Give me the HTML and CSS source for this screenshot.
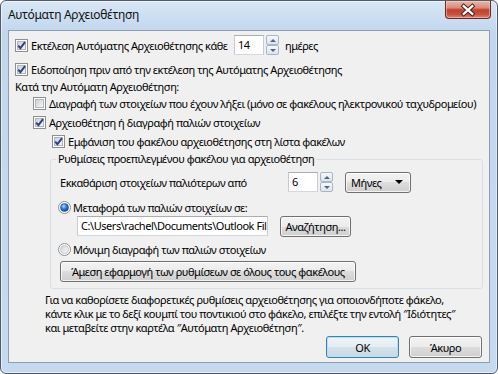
FILE: index.html
```html
<!DOCTYPE html>
<html lang="el">
<head>
    <meta charset="UTF-8">
    <title>Αυτόματη Αρχειοθέτηση</title>
    <link rel="stylesheet" href="styles.css">
</head>
<body>
    <!-- shared glyphs for checkboxes and radio buttons -->
    <svg class="defs" width="0" height="0">
        <defs>
            <linearGradient id="boxfill" x1="0" y1="0" x2="1" y2="1">
                <stop offset="0" stop-color="#cbcfd5"/>
                <stop offset="1" stop-color="#f7f7f7"/>
            </linearGradient>
            <linearGradient id="radiofill" x1="0" y1="0" x2="1" y2="1">
                <stop offset="0" stop-color="#d0d3d8"/>
                <stop offset="1" stop-color="#fafafa"/>
            </linearGradient>
            <radialGradient id="dotfill" cx="0.4" cy="0.35" r="0.7">
                <stop offset="0" stop-color="#b6e0fb"/>
                <stop offset="0.45" stop-color="#2f82de"/>
                <stop offset="1" stop-color="#103f94"/>
            </radialGradient>
            <symbol id="cb-off" viewBox="0 0 13 13">
                <rect x="0.5" y="0.5" width="12" height="12" fill="#fff" stroke="#8e8f8f"/>
                <rect x="2.5" y="2.5" width="8" height="8" fill="url(#boxfill)" stroke="#b3b7bd"/>
            </symbol>
            <symbol id="cb-on" viewBox="0 0 13 13">
                <rect x="0.5" y="0.5" width="12" height="12" fill="#fff" stroke="#8e8f8f"/>
                <rect x="2.5" y="2.5" width="8" height="8" fill="url(#boxfill)" stroke="#b3b7bd"/>
                <path d="M3.2 6.6 L5.4 9.2 L10 3.2" fill="none" stroke="#2a3f8e" stroke-width="1.9"/>
            </symbol>
            <symbol id="rb-off" viewBox="0 0 13 13">
                <circle cx="6.5" cy="6.5" r="6" fill="#fff" stroke="#8e8f8f"/>
                <circle cx="6.5" cy="6.5" r="4" fill="url(#radiofill)" stroke="#b8bcc2" stroke-width="0.8"/>
            </symbol>
            <symbol id="rb-on" viewBox="0 0 13 13">
                <circle cx="6.5" cy="6.5" r="6" fill="#fff" stroke="#8e8f8f"/>
                <circle cx="6.5" cy="6.5" r="4" fill="url(#dotfill)" stroke="#1d4f9c" stroke-width="0.6"/>
            </symbol>
        </defs>
    </svg>

    <div class="window">
        <div class="titlebar">
            <span class="title">Αυτόματη Αρχειοθέτηση</span>
            <div class="close">
                <svg width="46" height="18" viewBox="0 0 46 18">
                    <path d="M18.5 5 L27.5 13 M27.5 5 L18.5 13" stroke="#4a1a14" stroke-width="4.4" stroke-linecap="square"/>
                    <path d="M18.5 5 L27.5 13 M27.5 5 L18.5 13" stroke="#fff" stroke-width="2.4" stroke-linecap="square"/>
                </svg>
            </div>
        </div>

        <div class="client">
            <div class="row r1 lvl0">
                <svg class="box"><use href="#cb-on"/></svg>
                <span class="label run-label">Εκτέλεση Αυτόματης Αρχειοθέτησης κάθε</span>
                <div class="edit num">14</div>
                <div class="updown"><span class="ud up"></span><span class="ud down"></span></div>
                <span class="unit">ημέρες</span>
            </div>
            <div class="row r2 lvl0">
                <svg class="box"><use href="#cb-on"/></svg>
                <span class="label">Ειδοποίηση πριν από την εκτέλεση της Αυτόματης Αρχειοθέτησης</span>
            </div>
            <div class="row r3 lvl0">
                <span>Κατά την Αυτόματη Αρχειοθέτηση:</span>
            </div>
            <div class="row r4 lvl1">
                <svg class="box"><use href="#cb-off"/></svg>
                <span class="label">Διαγραφή των στοιχείων που έχουν λήξει (μόνο σε φακέλους ηλεκτρονικού ταχυδρομείου)</span>
            </div>
            <div class="row r5 lvl1">
                <svg class="box"><use href="#cb-on"/></svg>
                <span class="label">Αρχειοθέτηση ή διαγραφή παλιών στοιχείων</span>
            </div>
            <div class="row r6 lvl2">
                <svg class="box"><use href="#cb-on"/></svg>
                <span class="label">Εμφάνιση του φακέλου αρχειοθέτησης στη λίστα φακέλων</span>
            </div>

            <fieldset class="group">
                <legend>Ρυθμίσεις προεπιλεγμένου φακέλου για αρχειοθέτηση</legend>
                <div class="row r7">
                    <span class="clean-label">Εκκαθάριση στοιχείων παλιότερων από</span>
                    <div class="edit num">6</div>
                    <div class="updown"><span class="ud up"></span><span class="ud down"></span></div>
                    <div class="btn combo"><span>Μήνες</span><span class="arrow"></span></div>
                </div>
                <div class="row r8">
                    <svg class="box radio"><use href="#rb-on"/></svg>
                    <span class="label">Μεταφορά των παλιών στοιχείων σε:</span>
                </div>
                <div class="row r-path">
                    <div class="edit path">C:\Users\rachel\Documents\Outlook Fil</div>
                    <div class="btn browse">Αναζήτηση...</div>
                </div>
                <div class="row r9">
                    <svg class="box radio"><use href="#rb-off"/></svg>
                    <span class="label">Μόνιμη διαγραφή των παλιών στοιχείων</span>
                </div>
                <div class="row r-apply">
                    <div class="btn apply">Άμεση εφαρμογή των ρυθμίσεων σε όλους τους φακέλους</div>
                </div>
            </fieldset>

            <p class="note">Για να καθορίσετε διαφορετικές ρυθμίσεις αρχειοθέτησης για οποιονδήποτε φάκελο,<br>κάντε κλικ με το δεξί κουμπί του ποντικιού στο φάκελο, επιλέξτε την εντολή ″Ιδιότητες″<br>και μεταβείτε στην καρτέλα ″Αυτόματη Αρχειοθέτηση″.</p>

            <div class="actions">
                <div class="btn ok">OK</div>
                <div class="btn">Άκυρο</div>
            </div>
        </div>
    </div>
</body>
</html>
```

FILE: styles.css
```css
body {
    margin: 0;
    font-family: "Noto Sans", "Open Sans", sans-serif;
    font-size: 11px;
    letter-spacing: -0.45px;
    color: #000;
    background-color: #fff;
}

.defs {
    position: absolute;
    width: 0;
    height: 0;
}

.window {
    width: 498px;
    height: 374px;
    box-sizing: border-box;
    border: 1px solid #525b67;
    border-radius: 6px;
    background: linear-gradient(#d8e7f6, #c2d7ee 30px, #c6daef);
    box-shadow: inset 0 0 0 1px rgba(255, 255, 255, 0.55);
    display: flex;
    flex-direction: column;
    overflow: hidden;
}

.titlebar {
    height: 29px;
    display: flex;
    justify-content: space-between;
    align-items: flex-start;
    padding-left: 7px;
}

.title {
    line-height: 28px;
    font-size: 12px;
    letter-spacing: -0.3px;
    color: #111;
}

.close {
    width: 46px;
    height: 18px;
    margin-right: 6px;
    box-sizing: border-box;
    border: 1px solid #6a2a22;
    border-top: none;
    border-radius: 0 0 4px 4px;
    background: linear-gradient(#e9b7aa, #d98b7b 40%, #c2412f 52%, #c8513d 78%, #de8670);
    box-shadow: inset 0 0 0 1px rgba(255, 220, 210, 0.45);
    display: flex;
}

.client {
    margin: 0 7px;
    height: 333px;
    box-sizing: border-box;
    border: 1px solid #8d9db2;
    background-color: #f0f0f0;
    padding-top: 3px;
}

.row {
    display: flex;
    align-items: center;
    white-space: nowrap;
}

.lvl0 { padding-left: 6px; }
.lvl1 { padding-left: 24px; }
.lvl2 { padding-left: 43px; }

.r1 { height: 22px; }
.r2 { height: 18px; margin-top: 4px; }
.r3 { height: 16px; }
.r4 { height: 16px; margin-top: 1px; }
.r5 { height: 18px; margin-top: 2px; }
.r6 { height: 18px; margin-top: 1px; }

.box {
    width: 13px;
    height: 13px;
    flex: none;
    margin-right: 3px;
}

.radio {
    margin-left: -2px;
    margin-right: 2px;
}

.run-label {
    width: 203px;
}

.edit {
    box-sizing: border-box;
    height: 20px;
    background-color: #fff;
    border: 1px solid #abadb3;
    border-bottom-color: #d5d8de;
    border-left-color: #c9ccd3;
    border-right-color: #c9ccd3;
    line-height: 18px;
    padding-left: 3px;
}

.num {
    width: 30px;
}

.updown {
    display: flex;
    flex-direction: column;
    width: 13px;
    height: 20px;
    margin-left: 2px;
}

.ud {
    flex: 1;
    box-sizing: border-box;
    border: 1px solid #a8b6c8;
    border-radius: 2px;
    background: linear-gradient(#f7f9fc, #dde4ed);
    display: flex;
    align-items: center;
    justify-content: center;
}

.ud::after {
    content: "";
    border-left: 3px solid transparent;
    border-right: 3px solid transparent;
}

.up::after {
    border-bottom: 3px solid #4f6686;
}

.down::after {
    border-top: 3px solid #4f6686;
}

.unit {
    margin-left: 6px;
}

.group {
    margin: 1px 6px 0 41px;
    padding: 4px 6px 6px 9px;
    border: 1px solid #d5dfe5;
    border-radius: 3px;
    min-width: 0;
}

.group legend {
    padding: 0 2px;
    margin-left: -4px;
    line-height: 16px;
}

.r7 { height: 22px; }
.r8 { height: 16px; margin-top: 6px; }
.r-path { height: 22px; }
.r9 { height: 18px; margin-top: 3px; }
.r-apply { height: 21px; margin-top: 3px; }

.clean-label {
    width: 228px;
}

.btn {
    box-sizing: border-box;
    height: 21px;
    border: 1px solid #707070;
    border-radius: 3px;
    background: linear-gradient(#f3f3f3, #ebebeb 50%, #dddddd 50%, #cfcfcf);
    box-shadow: inset 0 0 0 1px rgba(255, 255, 255, 0.75);
    display: flex;
    align-items: center;
    justify-content: center;
    white-space: nowrap;
}

.combo {
    width: 66px;
    margin-left: 12px;
    justify-content: space-between;
    padding: 0 7px 0 5px;
}

.arrow {
    border-left: 4px solid transparent;
    border-right: 4px solid transparent;
    border-top: 4px solid #000;
}

.path {
    width: 191px;
    margin-left: 17px;
    overflow: hidden;
    white-space: nowrap;
}

.browse {
    width: 71px;
    margin-left: 12px;
}

.apply {
    width: 296px;
}

.note {
    margin: 4px 0 0;
    padding-left: 36px;
    line-height: 14px;
    white-space: nowrap;
}

.actions {
    display: flex;
    justify-content: flex-end;
    gap: 10px;
    margin-top: 1px;
    padding-right: 7px;
}

.actions .btn {
    width: 73px;
    height: 22px;
}

.actions .ok {
    border-color: #3c7fb1;
    background: linear-gradient(#eef4f8, #e4edf3 50%, #d6e2ea 50%, #c9d8e3);
    box-shadow: inset 0 0 0 1px #b4e3f8;
}
```
